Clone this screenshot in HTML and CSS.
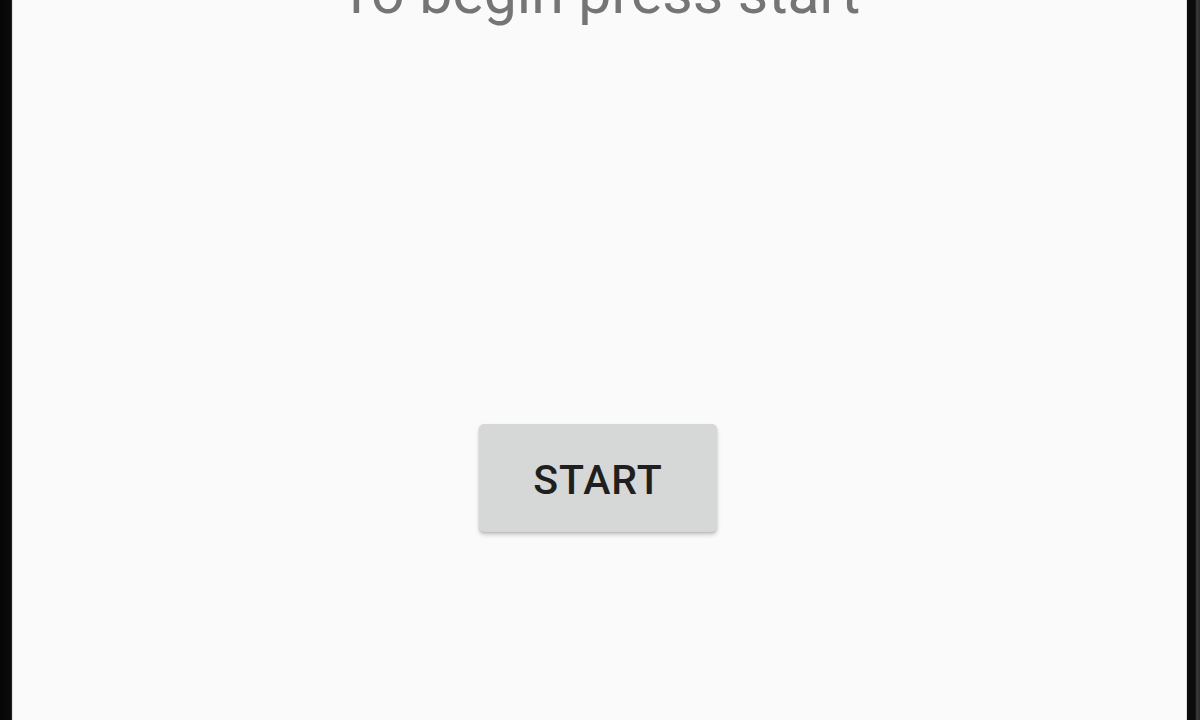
FILE: index.html
```html
<!DOCTYPE html>
<html>
<head>
<meta charset="utf-8">
<link rel="stylesheet" href="styles.css">
</head>
<body>
<div class="frame">
  <div class="screen">
    <p class="prompt">To begin press start</p>
    <button class="start-btn">START</button>
  </div>
</div>
</body>
</html>
```
FILE: styles.css
```css
html, body {
  margin: 0;
  padding: 0;
  width: 1200px;
  height: 720px;
  overflow: hidden;
  background: #0a0a0a;
}
.frame {
  width: 1200px;
  height: 720px;
  box-sizing: border-box;
  padding: 0 13px 0 12px;
  background: linear-gradient(to right, #050505 0, #0b0b0b 11px, #3a3a3a 12px, #0b0b0b 12px, #0b0b0b 1195px, #3c3c3c 1197px, #2a2a2a 1200px);
}
.screen {
  height: 720px;
  background: #fafafa;
  display: flex;
  flex-direction: column;
  align-items: center;
  box-shadow: inset 1px 0 0 #e0e0e0, inset -1px 0 0 #e0e0e0;
}
.prompt {
  margin: -42px 0 0 0;
  font-family: Roboto, "Liberation Sans", sans-serif;
  font-size: 59px;
  line-height: 70px;
  color: #757575;
  white-space: nowrap;
}
.start-btn {
  margin: 396px 3px 0 0;
  width: 238px;
  height: 108px;
  border: none;
  border-radius: 5px;
  background: #d6d7d7;
  color: #1f1f1f;
  font-family: Roboto, "Liberation Sans", sans-serif;
  font-weight: 500;
  font-size: 41px;
  letter-spacing: 1px;
  box-shadow: 0 3px 4px rgba(0,0,0,0.18), 0 1px 2px rgba(0,0,0,0.12);
  padding: 4px 0 0 0;
}
```
